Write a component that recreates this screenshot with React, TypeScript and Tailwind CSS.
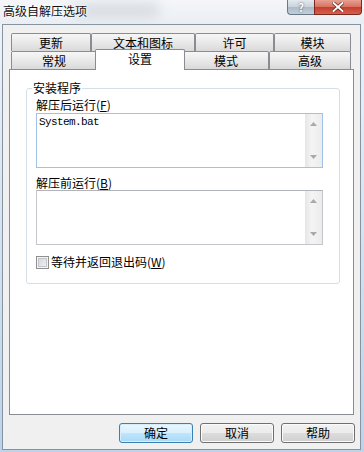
import React from "react";

const cjk = "font-['Microsoft_YaHei','Noto_Sans_CJK_SC',sans-serif]";

function BackTab({ label, className }: { label: string; className: string }) {
  return (
    <div
      className={`flex h-[18px] items-center justify-center rounded-t-[2px] border border-b-0 border-[#898c95] bg-[linear-gradient(to_bottom,#f6f6f6,#e9e9e9_50%,#d9d9d9)] pt-[1px] leading-[12px] ${className}`}
    >
      {label}
    </div>
  );
}

function ScrollBar() {
  return (
    <div className="flex w-[17px] flex-col items-center justify-between bg-[linear-gradient(to_right,#e6e6e6,#f4f4f4_40%,#ececec)] py-[8px]">
      <svg width="7" height="4" viewBox="0 0 7 4">
        <path d="M3.5 0L7 4H0Z" fill="#a9a9a9" />
      </svg>
      <svg width="7" height="4" viewBox="0 0 7 4">
        <path d="M0 0H7L3.5 4Z" fill="#a9a9a9" />
      </svg>
    </div>
  );
}

function Edit({ text, focused }: { text?: string; focused?: boolean }) {
  return (
    <div
      className={`flex h-[55px] w-[287px] border bg-white ${
        focused ? "border-[#9fc3e6]" : "border-[#c3c7cc] border-t-[#b0b4ba]"
      }`}
    >
      <div className="flex-1 pl-[2px] pt-[2px] font-['Liberation_Mono',monospace] text-[11px] leading-[12px] tracking-[-0.6px] text-black">
        {text}
      </div>
      <ScrollBar />
    </div>
  );
}

function Button({ label, primary }: { label: string; primary?: boolean }) {
  return (
    <button
      className={`flex h-[20px] w-[74px] items-center justify-center rounded-[3px] border text-[12px] leading-[14px] text-black ${
        primary
          ? "border-[#3c7fb1] bg-[linear-gradient(to_bottom,#eaf6fd,#d9f0fc_50%,#bee6fd_50%,#a7d9f5)] shadow-[inset_0_0_0_1px_#d4eefc]"
          : "border-[#707070] bg-[linear-gradient(to_bottom,#f2f2f2,#ebebeb_50%,#dddddd_50%,#cfcfcf)] shadow-[inset_0_0_0_1px_#fbfbfb]"
      }`}
    >
      {label}
    </button>
  );
}

export default function App() {
  return (
    <div
      className={`flex h-[452px] w-[364px] flex-col overflow-hidden bg-[linear-gradient(to_bottom,#f1f4f8,#dbe6f1_40%,#bcd3ea)] ${cjk} text-[12px] text-black`}
    >
      {/* caption */}
      <div className="relative flex h-[24px] shrink-0 items-start justify-between bg-[linear-gradient(to_bottom,#f4f6f9,#eaeef3)]">
        <div className="absolute left-[70px] top-[2px] h-[16px] w-[90px] rounded-full bg-[#b9c0c8] opacity-40 blur-[6px]" />
        <div className="relative pl-[3px] pt-[3px] leading-[16px] text-[#111] [text-shadow:0_0_6px_#fff,0_0_3px_#fff]">
          高级自解压选项
        </div>
        <div className="relative mr-[2px] flex">
          <div className="flex h-[15px] w-[27px] items-center justify-center rounded-bl-[4px] border border-t-0 border-r-0 border-[#6b7888] bg-[linear-gradient(to_bottom,#e4e9ef,#c9d2dc_50%,#adbac7_50%,#c3ced9)] text-[11px] font-bold leading-[12px] text-white [text-shadow:0_0_2px_#3c4855]">
            ?
          </div>
          <div className="flex h-[15px] w-[48px] items-center justify-center rounded-br-[4px] border border-t-0 border-[#7a2a22] bg-[linear-gradient(to_bottom,#e8a192,#d8705f_50%,#c43d2c_50%,#d4604c)]">
            <svg width="12" height="10" viewBox="0 0 12 10">
              <path
                d="M1.5 1L10.5 9M10.5 1L1.5 9"
                stroke="#4a1a14"
                strokeWidth="3.2"
                strokeLinecap="square"
              />
              <path
                d="M1.5 1L10.5 9M10.5 1L1.5 9"
                stroke="#ffffff"
                strokeWidth="2"
                strokeLinecap="square"
              />
            </svg>
          </div>
        </div>
      </div>

      {/* client area */}
      <div className="mb-[2px] ml-[2px] mr-[3px] flex flex-1 flex-col border border-[#8693a1] bg-[#f0f0f0]">
        <div className="ml-[6px] mt-[8px] w-[345px]">
          <div className="flex pl-[2px]">
            <BackTab label="更新" className="w-[80px]" />
            <BackTab label="文本和图标" className="w-[104px]" />
            <BackTab label="许可" className="w-[79px]" />
            <BackTab label="模块" className="w-[77px]" />
          </div>
          <div className="flex h-[18px] items-start pl-[2px]">
            <BackTab label="常规" className="w-[86px]" />
            <div className="relative z-10 -mx-[2px] -mt-[2px] flex h-[21px] w-[90px] items-start justify-center rounded-t-[2px] border border-b-0 border-[#898c95] bg-white pt-[2px] leading-[13px]">
              设置
            </div>
            <BackTab label="模式" className="w-[86px]" />
            <BackTab label="高级" className="w-[82px]" />
          </div>
          <div className="h-[346px] border border-[#898c95] bg-white pl-[16px] pt-[18px]">
            <div className="relative h-[196px] w-[314px] rounded-[3px] border border-[#d5dfe5] pl-[9px] pt-[9px] leading-[14px]">
              <span className="absolute left-[5px] top-[-8px] bg-white px-[1px]">安装程序</span>
              <div>
                解压后运行(<u>F</u>)
              </div>
              <div className="mt-[1px]">
                <Edit text="System.bat" focused />
              </div>
              <div className="mt-[8px]">
                解压前运行(<u>B</u>)
              </div>
              <Edit />
              <div className="mt-[10px] flex items-center gap-[2px]">
                <div className="h-[13px] w-[13px] border border-[#8e8f8f] bg-[linear-gradient(to_bottom_right,#cfd2d6,#f4f4f4)] shadow-[inset_0_0_0_1px_#f4f4f4,inset_0_0_0_2px_#c2c6cc]" />
                <span>
                  等待并返回退出码(<u>W</u>)
                </span>
              </div>
            </div>
          </div>
        </div>
        <div className="mt-[8px] flex justify-end gap-[7px] pr-[5px]">
          <Button label="确定" primary />
          <Button label="取消" />
          <Button label="帮助" />
        </div>
      </div>
    </div>
  );
}
